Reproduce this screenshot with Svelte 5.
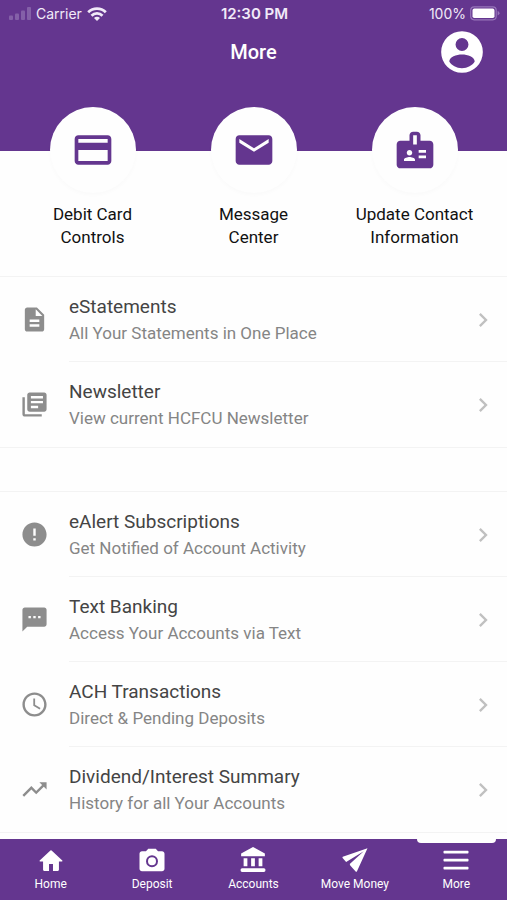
<script>
  const icons = {
    card: 'M20 4H4c-1.11 0-2 .89-2 2v12c0 1.11.89 2 2 2h16c1.11 0 2-.89 2-2V6c0-1.11-.89-2-2-2zm0 14H4v-6h16v6zm0-10H4V6h16v2z',
    mail: 'M20 4H4c-1.1 0-2 .9-2 2v12c0 1.1.9 2 2 2h16c1.1 0 2-.9 2-2V6c0-1.1-.9-2-2-2zm0 4l-8 5-8-5V6l8 5 8-5v2z',
    badge: 'M20 7h-5V4c0-1.1-.9-2-2-2h-2c-1.1 0-2 .9-2 2v3H4c-1.1 0-2 .9-2 2v11c0 1.1.9 2 2 2h16c1.1 0 2-.9 2-2V9c0-1.1-.9-2-2-2zM9 12c.83 0 1.5.67 1.5 1.5S9.83 15 9 15s-1.500-.67-1.500-1.500S8.170 12 9 12zm3 6H6v-.75c0-1 2-1.500 3-1.500s3 .5 3 1.500V18zm1-9h-2V4h2v5zm5 7.500h-4V15h4v1.500zm0-3h-4V12h4v1.500z',
    doc: 'M14 2H6c-1.100 0-2 .9-2 2v16c0 1.100.9 2 2 2h12c1.100 0 2-.9 2-2V8l-6-6zm2 16H8v-2h8v2zm0-4H8v-2h8v2zm-3-5V3.500L18.500 9H13z',
    library: 'M4 6H2v14c0 1.100.9 2 2 2h14v-2H4V6zm16-4H8c-1.100 0-2 .9-2 2v12c0 1.100.9 2 2 2h12c1.100 0 2-.9 2-2V4c0-1.100-.9-2-2-2zm-1 9H9V9h10v2zm-4 4H9v-2h6v2zm4-8H9V5h10v2z',
    alert: 'M12 2C6.480 2 2 6.480 2 12s4.480 10 10 10 10-4.480 10-10S17.520 2 12 2zm1 15h-2v-2h2v2zm0-4h-2V7h2v6z',
    text: 'M20 2H4c-1.100 0-1.990.9-1.990 2L2 22l4-4h14c1.100 0 2-.9 2-2V4c0-1.100-.9-2-2-2zM9 11H7V9h2v2zm4 0h-2V9h2v2zm4 0h-2V9h2v2z',
    clock: 'M11.990 2C6.470 2 2 6.480 2 12s4.470 10 9.990 10C17.520 22 22 17.520 22 12S17.520 2 11.990 2zM12 20c-4.420 0-8-3.580-8-8s3.580-8 8-8 8 3.580 8 8-3.580 8-8 8zm.5-13H11v6l5.250 3.150.75-1.230-4.500-2.670z',
    trend: 'M16 6l2.290 2.290-4.880 4.880-4-4L2 16.590 3.410 18l6-6 4 4 6.300-6.290L22 12V6z',
    chevron: 'M8.590 16.590L13.170 12 8.590 7.410 10 6l6 6-6 6z',
    account: 'M12 2a10 10 0 1 0 0 20 10 10 0 0 0 0-20zm0 3.300a3.100 3.100 0 1 1 0 6.200 3.100 3.100 0 0 1 0-6.200zm0 14.500c-2.700 0-5-1.300-6.100-3.200 0-2.200 3.400-3.400 6.100-3.400s6.100 1.200 6.100 3.400c-1.100 1.900-3.400 3.200-6.100 3.200z',
    home: 'M10.300 20.500v-6h3.400v6h4.200q.9 0 .9-.9v-7.100h2.700q.6-.4.2-.9L12.500 2.900q-.5-.4-1 0L2.300 11.600q-.4.5.2.9h2.700v7.100q0 .9.9.9z',
    camera: 'M9 3L7.170 5H4c-1.100 0-2 .9-2 2v12c0 1.100.9 2 2 2h16c1.100 0 2-.9 2-2V7c0-1.100-.9-2-2-2h-3.170L15 3H9zm3 5.200a4.800 4.800 0 1 1 0 9.600 4.800 4.800 0 0 1 0-9.600zm0 1.600a3.200 3.200 0 1 0 0 6.400 3.200 3.200 0 0 0 0-6.400z',
    bank: 'M12 1.500L2.500 6.800V9h19V6.800zM4.500 10.500v6.500h3v-6.500zm6 0v6.500h3v-6.500zm6 0v6.500h3v-6.500zM3.300 18.500q-1.300 0-1.300 1.500t1.300 1.500h17.400q1.300 0 1.300-1.500t-1.300-1.500z',
    send: 'M22 2.500L2.200 9.400q-.5.300-.1.900l2.800 3.200L19 5 7.800 15.200l.4 1.100 4.500 5q.5.400.8-.2z',
    menu: 'M2.600 4.500h18.800q.6 0 .6.600v1q0 .6-.6.600H2.600Q2 6.700 2 6.100v-1q0-.6.600-.6zm0 6.400h18.800q.6 0 .6.600v1q0 .6-.6.600H2.600q-.6 0-.6-.6v-1q0-.6.600-.6zm0 6.400h18.800q.6 0 .6.600v1q0 .6-.6.600H2.600q-.6 0-.6-.6v-1q0-.6.600-.6z'
  };

  const shortcuts = [
    { icon: 'card', lines: ['Debit Card', 'Controls'] },
    { icon: 'mail', lines: ['Message', 'Center'] },
    { icon: 'badge', lines: ['Update Contact', 'Information'] }
  ];

  const groups = [
    [
      { icon: 'doc', title: 'eStatements', note: 'All Your Statements in One Place' },
      { icon: 'library', title: 'Newsletter', note: 'View current HCFCU Newsletter' }
    ],
    [
      { icon: 'alert', title: 'eAlert Subscriptions', note: 'Get Notified of Account Activity' },
      { icon: 'text', title: 'Text Banking', note: 'Access Your Accounts via Text' },
      { icon: 'clock', title: 'ACH Transactions', note: 'Direct & Pending Deposits' },
      { icon: 'trend', title: 'Dividend/Interest Summary', note: 'History for all Your Accounts' }
    ]
  ];

  const tabs = [
    { icon: 'home', label: 'Home' },
    { icon: 'camera', label: 'Deposit' },
    { icon: 'bank', label: 'Accounts' },
    { icon: 'send', label: 'Move Money' },
    { icon: 'menu', label: 'More' }
  ];

  let current = $state('More');
</script>

{#snippet icon(name, size)}
  <svg width={size} height={size} viewBox="0 0 24 24" fill="currentColor" fill-rule="evenodd" aria-hidden="true">
    <path d={icons[name]} />
  </svg>
{/snippet}

<div class="app">
  <header>
    <div class="status">
      <div class="carrier">
        <svg class="signal" width="22" height="14" viewBox="0 0 22 14" fill="currentColor" aria-hidden="true">
          <rect x="0" y="8.500" width="4" height="4.500" rx="1" />
          <rect x="6" y="6.500" width="4" height="6.500" rx="1" />
          <rect x="12" y="3.500" width="4" height="9.500" rx="1" />
          <rect x="18" y="0" width="4" height="13" rx="1" />
        </svg>
        <span>Carrier</span>
        <svg width="20" height="14" viewBox="0 0 20 14" fill="none" stroke="currentColor" stroke-width="2.800" aria-hidden="true">
          <path d="M1.200 5.200a12.600 12.600 0 0 1 17.600 0" />
          <path d="M4.500 8.700a7.800 7.800 0 0 1 11 0" />
          <path d="M7 11.100a4.200 4.200 0 0 1 6 0L10 14z" fill="currentColor" stroke="none" />
        </svg>
      </div>
      <time>12:30 PM</time>
      <div class="battery">
        <span>100%</span>
        <svg width="30" height="15" viewBox="0 0 30 15" aria-hidden="true">
          <rect x="0.700" y="0.800" width="25.500" height="13" rx="3.500" fill="none" stroke="#9775ba" stroke-width="1.200" />
          <rect x="2.500" y="2.600" width="22" height="9.400" rx="1.800" fill="#fff" />
          <path d="M27.600 5.100q1.900.6 1.900 2.200t-1.900 2.200z" fill="#9775ba" />
        </svg>
      </div>
    </div>
    <div class="title">
      <h1>More</h1>
      <button class="profile" aria-label="Profile">{@render icon('account', 50)}</button>
    </div>
  </header>

  <nav class="shortcuts" aria-label="Shortcuts">
    {#each shortcuts as item}
      <button>
        <span class="disc">{@render icon(item.icon, 44)}</span>
        <span class="caption">{item.lines[0]}<br />{item.lines[1]}</span>
      </button>
    {/each}
  </nav>

  <main>
    {#each groups as group}
      <ul>
        {#each group as row}
          <li>
            <a href="#{row.icon}">
              <span class="lead">{@render icon(row.icon, 29)}</span>
              <span class="body">
                <span class="words">
                  <span class="name">{row.title}</span>
                  <span class="note">{row.note}</span>
                </span>
                <span class="chevron">{@render icon('chevron', 28)}</span>
              </span>
            </a>
          </li>
        {/each}
      </ul>
    {/each}
  </main>

  <nav class="tabs" aria-label="Main">
    {#each tabs as tab}
      <button class:active={current === tab.label} onclick={() => (current = tab.label)}>
        {@render icon(tab.icon, tab.icon === 'home' ? 28 : 30)}
        <span>{tab.label}</span>
      </button>
    {/each}
  </nav>
</div>

<style>
  :global(body) {
    margin: 0;
    background: #fefefe;
  }
  .app {
    display: flex;
    flex-direction: column;
    height: 100vh;
    overflow: hidden;
    font-family: Roboto, sans-serif;
    color: #111;
    background: #fefefe;
  }
  svg {
    display: block;
    flex: none;
  }
  button {
    border: 0;
    padding: 0;
    background: none;
    font: inherit;
    color: inherit;
    cursor: pointer;
  }
  header {
    flex: none;
    box-sizing: border-box;
    height: 151px;
    background: #64368f;
    color: #fff;
  }
  .status {
    display: grid;
    grid-template-columns: 1fr auto 1fr;
    align-items: center;
    height: 27px;
    padding: 0 7px 0 9px;
    font-family: Inter, sans-serif;
    font-size: 14px;
    line-height: 27px;
    color: #f1eaf8;
  }
  .carrier,
  .battery {
    display: flex;
    align-items: center;
    gap: 4px;
  }
  .carrier {
    gap: 5px;
  }
  .battery {
    justify-content: flex-end;
  }
  .signal {
    color: #8460a8;
  }
  time {
    font-size: 15px;
    font-weight: 600;
  }
  .title {
    display: grid;
    grid-template-columns: 50px 1fr 50px;
    align-items: center;
    padding: 0 20px;
  }
  h1 {
    grid-column: 2;
    margin: 0;
    font-size: 20px;
    font-weight: 500;
    text-align: center;
  }
  .shortcuts {
    flex: none;
    display: grid;
    grid-template-columns: repeat(3, 1fr);
    padding: 0 12px 27px;
    margin-top: -44px;
  }
  .shortcuts button {
    display: flex;
    flex-direction: column;
    align-items: center;
    gap: 10px;
  }
  .disc {
    display: grid;
    place-items: center;
    width: 86px;
    height: 86px;
    border-radius: 50%;
    background: #fefefe;
    box-shadow: 0 2px 4px rgba(0, 0, 0, 0.02);
    color: #64368f;
  }
  .caption {
    font-size: 17px;
    line-height: 23px;
  }
  main {
    flex: 1;
    min-height: 0;
    overflow: hidden;
  }
  ul {
    list-style: none;
    margin: 0 0 43px;
    padding: 0;
    border: solid #f3f3f3;
    border-width: 1px 0;
  }
  a {
    display: flex;
    color: inherit;
    text-decoration: none;
  }
  .lead {
    display: grid;
    place-items: center;
    width: 69px;
    color: #8d8d8d;
  }
  .body {
    flex: 1;
    display: flex;
    align-items: center;
    justify-content: space-between;
    padding: 17px 10px 15px 0;
    border-bottom: 1px solid #f3f3f3;
  }
  li:last-child .body {
    border-bottom-color: transparent;
  }
  .words {
    display: flex;
    flex-direction: column;
  }
  .name,
  .note {
    line-height: 26px;
  }
  .name {
    font-size: 19px;
    color: #444;
  }
  .note {
    font-size: 17px;
    color: #858585;
  }
  .chevron {
    color: #c0c0c0;
  }
  .tabs {
    flex: none;
    display: grid;
    grid-template-columns: repeat(5, 1fr);
    height: 61px;
    background: #64368f;
    color: #fff;
  }
  .tabs button {
    position: relative;
    display: flex;
    flex-direction: column;
    align-items: center;
    justify-content: flex-end;
    padding-bottom: 7px;
  }
  .tabs span {
    font-size: 12px;
    line-height: 18px;
  }
  .tabs .active::before {
    content: '';
    position: absolute;
    top: 0;
    left: 11px;
    right: 11px;
    height: 4px;
    border-radius: 0 0 4px 4px;
    background: #fefefe;
  }
</style>
